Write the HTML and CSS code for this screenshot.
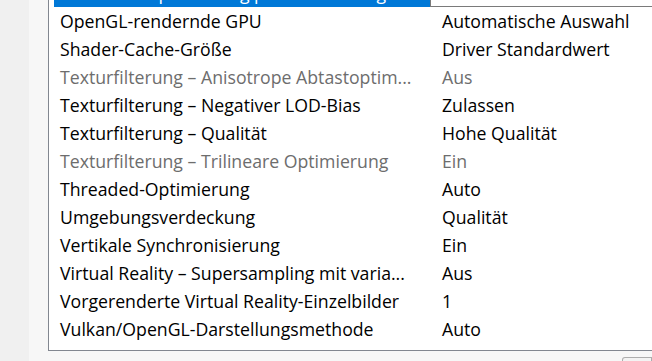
FILE: index.html
```html
<!DOCTYPE html>
<html lang="de">
<head>
    <meta charset="UTF-8">
    <meta name="viewport" content="width=device-width, initial-scale=1.0">
    <title>3D-Einstellungen</title>
    <link rel="stylesheet" href="styles.css">
</head>
<body>
    <div class="page">
        <div class="gutter"></div>
        <div class="sheet">
            <div class="settings">
                <div class="row selected">
                    <span class="name">Threaded-Optimierung pro Anwendung</span>
                    <span class="value"><span class="combo">Auto</span></span>
                </div>
                <div class="row">
                    <span class="name">OpenGL-rendernde GPU</span>
                    <span class="value">Automatische Auswahl</span>
                </div>
                <div class="row">
                    <span class="name">Shader-Cache-Größe</span>
                    <span class="value">Driver Standardwert</span>
                </div>
                <div class="row disabled">
                    <span class="name">Texturfilterung – Anisotrope Abtastoptim...</span>
                    <span class="value">Aus</span>
                </div>
                <div class="row">
                    <span class="name">Texturfilterung – Negativer LOD-Bias</span>
                    <span class="value">Zulassen</span>
                </div>
                <div class="row">
                    <span class="name">Texturfilterung – Qualität</span>
                    <span class="value">Hohe Qualität</span>
                </div>
                <div class="row disabled">
                    <span class="name">Texturfilterung – Trilineare Optimierung</span>
                    <span class="value">Ein</span>
                </div>
                <div class="row">
                    <span class="name">Threaded-Optimierung</span>
                    <span class="value">Auto</span>
                </div>
                <div class="row">
                    <span class="name">Umgebungsverdeckung</span>
                    <span class="value">Qualität</span>
                </div>
                <div class="row">
                    <span class="name">Vertikale Synchronisierung</span>
                    <span class="value">Ein</span>
                </div>
                <div class="row">
                    <span class="name">Virtual Reality – Supersampling mit varia...</span>
                    <span class="value">Aus</span>
                </div>
                <div class="row">
                    <span class="name">Vorgerenderte Virtual Reality-Einzelbilder</span>
                    <span class="value">1</span>
                </div>
                <div class="row">
                    <span class="name">Vulkan/OpenGL-Darstellungsmethode</span>
                    <span class="value">Auto</span>
                </div>
                <div class="list-end"></div>
            </div>
            <div class="footer">
                <button type="button" class="restore"></button>
            </div>
        </div>
    </div>
</body>
</html>
```

FILE: styles.css
```css
body {
    margin: 0;
    padding: 0;
    background-color: #f0f0f0;
    font-family: "Open Sans", "Noto Sans", sans-serif;
    font-size: 17.7px;
    color: #000;
    overflow: hidden;
}
.page {
    display: flex;
    height: 361px;
}
.gutter {
    width: 29px;
    flex: none;
    background: #f0f0f0;
}
.sheet {
    flex: 1;
    padding-left: 19px;
    background: #f7f7f7;
    display: flex;
    flex-direction: column;
    min-width: 0;
}
.settings {
    margin-top: -21px;
    background: #fff;
    border-left: 1px solid #828790;
    border-bottom: 1px solid #828790;
}
.row {
    display: grid;
    grid-template-columns: 376px 1fr;
    height: 28px;
    line-height: 28px;
    padding-left: 5px;
    white-space: nowrap;
}
.name {
    padding-left: 6px;
    overflow: hidden;
}
.value {
    padding-left: 12px;
    overflow: hidden;
}
.disabled {
    color: #6d6d6d;
}
.selected .name {
    background: #0078d7;
    color: #fff;
}
.selected .value {
    padding-left: 0;
}
.combo {
    display: block;
    height: 27px;
    padding-left: 4px;
    border-left: 1px solid #7a7a7a;
    border-bottom: 1px solid #7a7a7a;
}
.list-end {
    height: 7px;
}
.footer {
    flex: 1;
    display: flex;
    justify-content: flex-end;
    align-items: flex-end;
}
.restore {
    width: 30px;
    height: 4px;
    margin: 0;
    padding: 0;
    border: 1px solid #adadad;
    border-bottom: none;
    border-radius: 3px 0 0 0;
    background: #f3f3f3;
}
```
